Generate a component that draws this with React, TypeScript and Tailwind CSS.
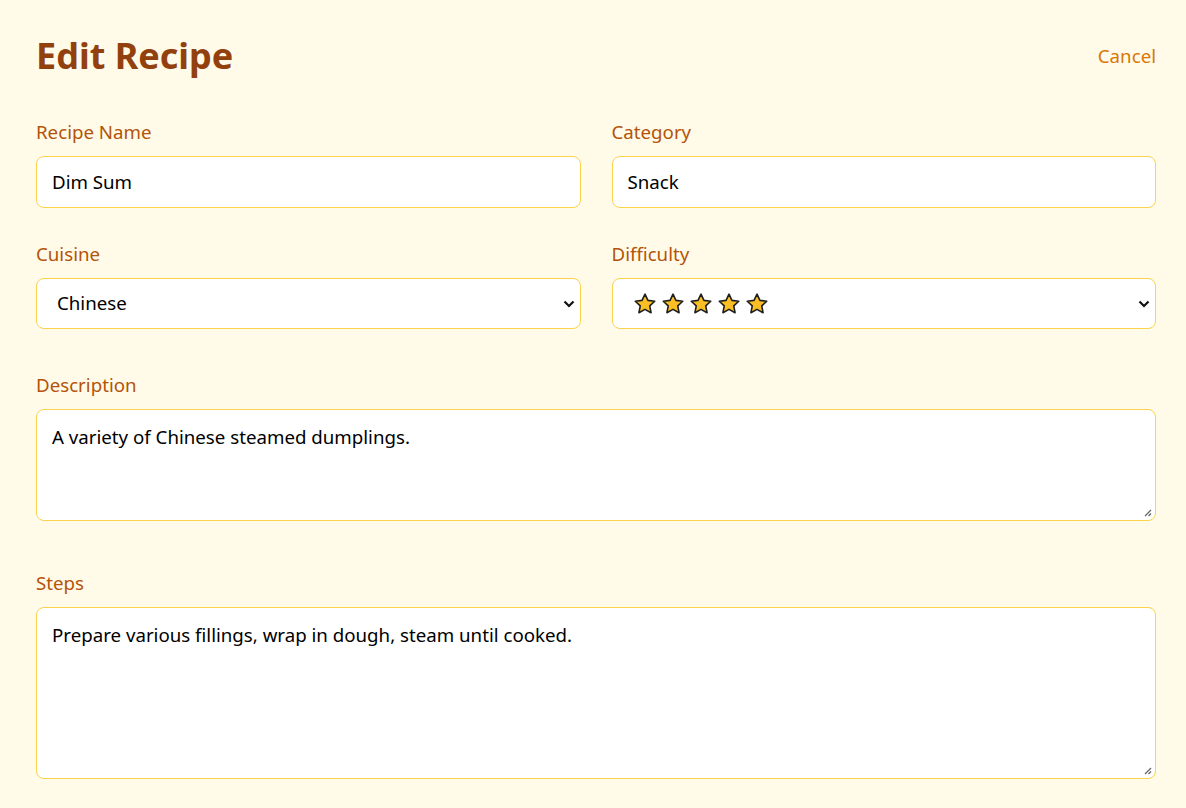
import React from "react";

const Star = () => (
  <svg width="24" height="24" viewBox="0 0 24 24" className="shrink-0">
    <path
      d="M12 2.2l2.95 6.2 6.8.85-5 4.7 1.3 6.75L12 17.4l-6.05 3.3 1.3-6.75-5-4.7 6.8-.85z"
      fill="#fbbf24"
      stroke="#1f1f1f"
      strokeWidth="1.6"
      strokeLinejoin="round"
    />
  </svg>
);

const Chevron = () => (
  <svg width="12" height="8" viewBox="0 0 12 8">
    <path d="M1.5 1.5L6 6l4.5-4.5" fill="none" stroke="#111" strokeWidth="2.2" />
  </svg>
);

export default function App() {
  const font = { fontFamily: '"Noto Sans", "Open Sans", sans-serif' };
  return (
    <div className="min-h-[808px] bg-[#fffbe8] pl-9 pr-[30px] pt-[34px] pb-6" style={font}>
      <div className="flex items-center justify-between">
        <h1 className="text-[36px] leading-[44px] font-bold text-[#92400e]">Edit Recipe</h1>
        <button className="text-[18.7px] text-[#d97706]">Cancel</button>
      </div>

      <div className="mt-[40px] grid grid-cols-2 gap-x-[31px] gap-y-8">
        <div>
          <label className="block text-[18.7px] leading-7 text-[#b45309] mb-[10px]">Recipe Name</label>
          <div className="h-[52px] rounded-lg border border-[#fcd34d] bg-white px-[15px] flex items-center text-[18.7px] text-black">
            Dim Sum
          </div>
        </div>
        <div>
          <label className="block text-[18.7px] leading-7 text-[#b45309] mb-[10px]">Category</label>
          <div className="h-[52px] rounded-lg border border-[#fcd34d] bg-white px-[15px] flex items-center text-[18.7px] text-black">
            Snack
          </div>
        </div>
        <div>
          <label className="block text-[18.7px] leading-7 text-[#b45309] mb-[10px]">Cuisine</label>
          <div className="h-[51px] rounded-lg border border-[#fcd34d] bg-white pl-5 pr-[5px] flex items-center justify-between text-[18.7px] text-black">
            <span>Chinese</span>
            <Chevron />
          </div>
        </div>
        <div>
          <label className="block text-[18.7px] leading-7 text-[#b45309] mb-[10px]">Difficulty</label>
          <div className="h-[51px] rounded-lg border border-[#fcd34d] bg-white pl-5 pr-[5px] flex items-center justify-between">
            <span className="flex items-center gap-[4px]">
              <Star />
              <Star />
              <Star />
              <Star />
              <Star />
            </span>
            <Chevron />
          </div>
        </div>
      </div>

      <div className="mt-[42px]">
        <label className="block text-[18.7px] leading-7 text-[#b45309] mb-[10px]">Description</label>
        <div className="relative h-[112px] rounded-lg border border-[#fcd34d] bg-white px-[15px] pt-[13px] text-[18.7px] leading-7 text-black">
          A variety of Chinese steamed dumplings.
          <svg className="absolute right-[3px] bottom-[3px]" width="9" height="9" viewBox="0 0 9 9">
            <path d="M8 2L2 8M8 5.5L5.5 8" stroke="#666" strokeWidth="1.3" />
          </svg>
        </div>
      </div>

      <div className="mt-[48px]">
        <label className="block text-[18.7px] leading-7 text-[#b45309] mb-[10px]">Steps</label>
        <div className="relative h-[172px] rounded-lg border border-[#fcd34d] bg-white px-[15px] pt-[13px] text-[18.7px] leading-7 text-black">
          Prepare various fillings, wrap in dough, steam until cooked.
          <svg className="absolute right-[3px] bottom-[3px]" width="9" height="9" viewBox="0 0 9 9">
            <path d="M8 2L2 8M8 5.5L5.5 8" stroke="#666" strokeWidth="1.3" />
          </svg>
        </div>
      </div>
    </div>
  );
}
